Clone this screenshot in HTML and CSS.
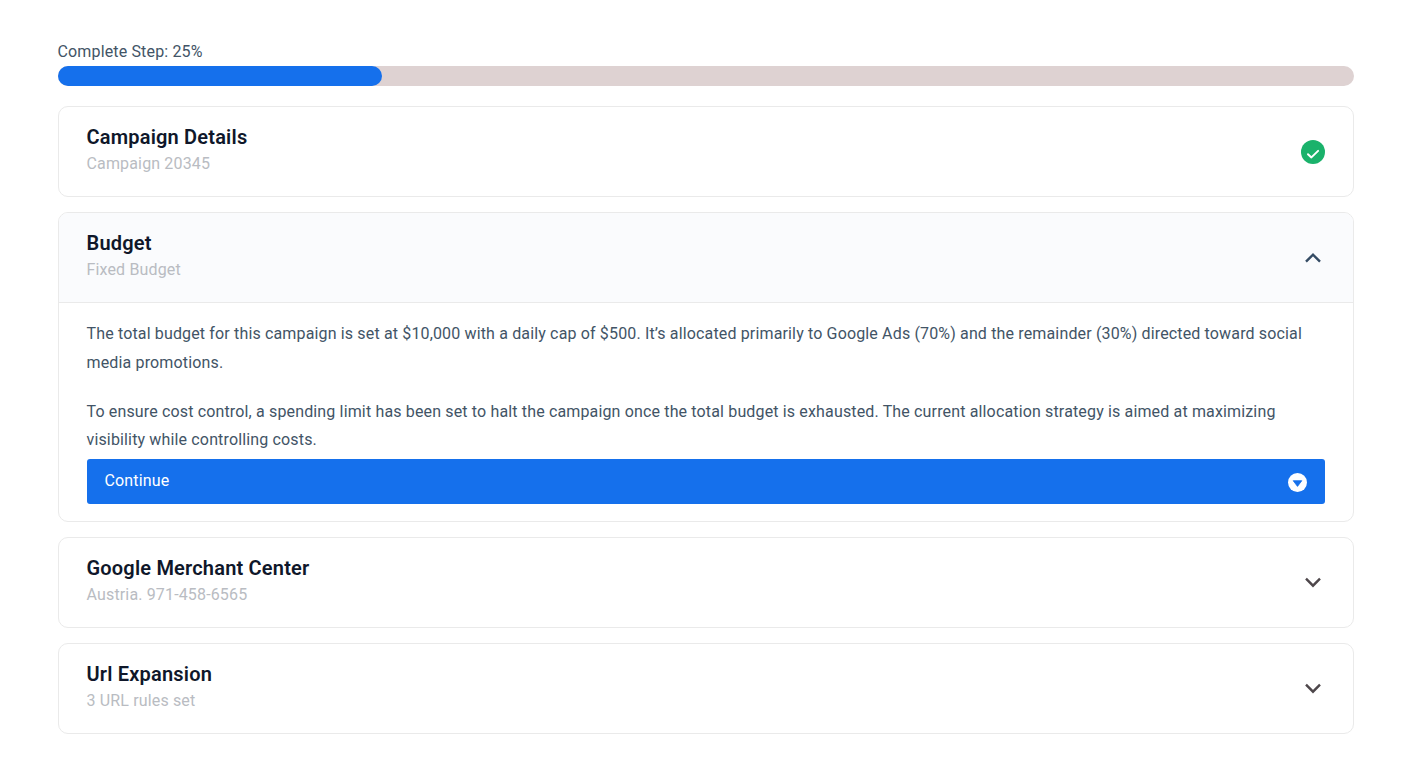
FILE: index.html
```
<!DOCTYPE html>
<html lang="en">
<head>
<meta charset="utf-8">
<title>Campaign setup</title>
<link rel="stylesheet" href="styles.css">
</head>
<body>
<main class="wizard">
  <div class="progress-label">Complete Step: 25%</div>
  <div class="progress"><div class="progress-fill" style="width:25%"></div></div>

  <section class="card">
    <header class="card-head">
      <div><h2 class="title">Campaign Details</h2><p class="subtitle">Campaign 20345</p></div>
      <svg class="icon" viewBox="0 0 24 24"><circle cx="12" cy="12" r="12" fill="#1ab26b"/><path d="M7 14.2l3.4 3.2 6.7-6.5" fill="none" stroke="#fff" stroke-width="2" stroke-linecap="round" stroke-linejoin="round"/></svg>
    </header>
  </section>

  <section class="card open">
    <header class="card-head">
      <div><h2 class="title">Budget</h2><p class="subtitle">Fixed Budget</p></div>
      <svg class="icon chevron" viewBox="0 0 24 24"><path d="M5 15.7l7-7 7 7"/></svg>
    </header>
    <div class="card-body">
      <p class="text">The total budget for this campaign is set at $10,000 with a daily cap of $500. It’s allocated primarily to Google Ads (70%) and the remainder (30%) directed toward social media promotions.</p>
      <p class="text">To ensure cost control, a spending limit has been set to halt the campaign once the total budget is exhausted. The current allocation strategy is aimed at maximizing visibility while controlling costs.</p>
      <button class="continue"><span>Continue</span>
        <svg class="continue-icon" viewBox="0 0 19 19"><circle cx="9.5" cy="9.5" r="9.5" fill="#fff"/><path d="M5.2 7.7h8.6L9.5 13.4z" fill="#1570ec" stroke="#1570ec" stroke-width=".8" stroke-linejoin="round"/></svg>
      </button>
    </div>
  </section>

  <section class="card">
    <header class="card-head">
      <div><h2 class="title">Google Merchant Center</h2><p class="subtitle">Austria. 971-458-6565</p></div>
      <svg class="icon chevron down" viewBox="0 0 24 24"><path d="M5 7.7l7 7 7-7"/></svg>
    </header>
  </section>

  <section class="card">
    <header class="card-head">
      <div><h2 class="title">Url Expansion</h2><p class="subtitle">3 URL rules set</p></div>
      <svg class="icon chevron down" viewBox="0 0 24 24"><path d="M5 7.7l7 7 7-7"/></svg>
    </header>
  </section>
</main>
</body>
</html>
```

FILE: styles.css
```
* { box-sizing: border-box; }
body {
  margin: 0;
  background: #fff;
  color: #425466;
  font: 400 16px/28.8px Roboto, sans-serif;
  letter-spacing: 0.15px;
}
h2, p { margin: 0; }
.wizard { width: 1296px; margin-left: 57.5px; padding-top: 38px; }
.progress-label { height: 28px; }
.progress { height: 20px; margin-bottom: 20px; border-radius: 10px; background: #ded2d2; }
.progress-fill { height: 100%; border-radius: 10px; background: #1570ec; }
.card { margin-bottom: 15px; border: 1px solid #eaeaea; border-radius: 10px; overflow: hidden; }
.card-head { display: flex; align-items: center; justify-content: space-between; height: 89px; padding: 0 28px; }
.card-head > div { padding-bottom: 5px; }
.title { color: #0f172a; font-size: 20px; font-weight: 600; line-height: 28px; letter-spacing: 0.19px; }
.subtitle { color: #b9bcc2; line-height: 25px; letter-spacing: 0.15px; }
.icon { width: 24px; height: 24px; flex: none; }
.chevron { fill: none; stroke: #344b64; stroke-width: 2.4; }
.chevron.down { stroke: #4e474b; }
.open .card-head { height: 90px; border-bottom: 1px solid #eaeaea; background: #fafbfd; }
.card-body { padding: 17px 28px 17px; }
.text + .text { margin-top: 20px; }
.continue {
  display: flex; align-items: center; justify-content: space-between;
  width: 100%; height: 45px; margin-top: 4px; padding: 0 18px;
  border: 0; border-radius: 3px; background: #1570ec; color: #fff;
  font: 450 16px/24px Roboto, sans-serif; letter-spacing: 0.15px;
}
.continue span { padding-bottom: 2px; }
.continue-icon { width: 19px; height: 19px; margin-top: 2px; }
```
